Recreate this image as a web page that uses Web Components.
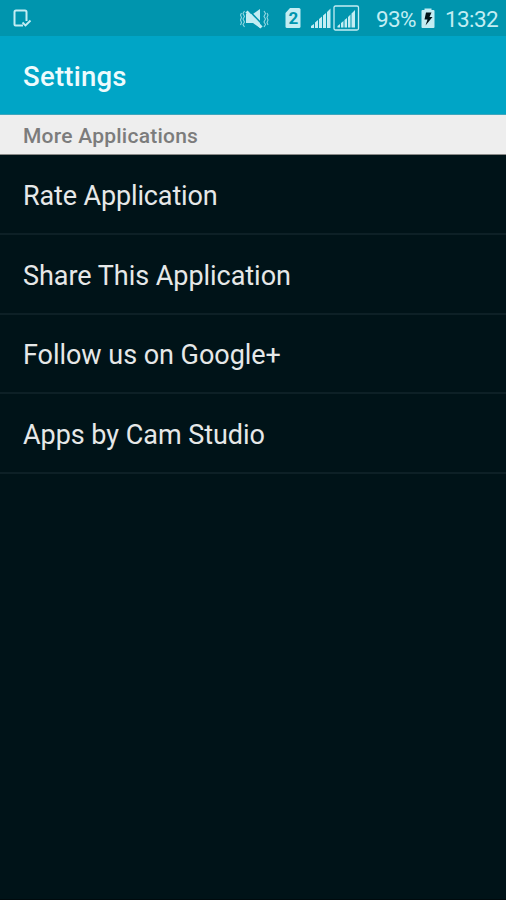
<!DOCTYPE html>
<html lang="en">
<head>
<meta charset="utf-8">
<title>Settings</title>
<style>
html, body {
    margin: 0;
    height: 100%;
}
body {
    font-family: Roboto, "Noto Sans", sans-serif;
    background: #001318;
    overflow: hidden;
}
</style>
</head>
<body>

<settings-screen>
    <status-bar slot="status" time="13:32" battery="93%"></status-bar>
    <action-bar slot="bar">Settings</action-bar>
    <list-header>More Applications</list-header>
    <list-item style="--spacing: -0.14px">Rate Application</list-item>
    <list-item>Share This Application</list-item>
    <list-item>Follow us on Google+</list-item>
    <list-item>Apps by Cam Studio</list-item>
</settings-screen>

<script>

/**
 * base class, fills the shadow root with the static html of the component
 */
class ScreenElement extends HTMLElement {
    constructor() {
        super();
        this.attachShadow({mode: "open"});
        this.shadowRoot.innerHTML = this.constructor.html;
    }
}

// ================================================================

/**
 * slots:
 *  - status
 *  - bar
 *  - default: the rows of the list
 */
class SettingsScreen extends ScreenElement {
    static html = `
        <style>
            :host {
                display: flex;
                flex-direction: column;
                box-sizing: border-box;
                height: 100vh;
                background: #001318;
                border-bottom: 1px solid #000a0d;
            }
            main { flex: 1; }
        </style>
        <slot name="status"></slot>
        <slot name="bar"></slot>
        <main><slot></slot></main>`;
}
customElements.define("settings-screen", SettingsScreen);

// ================================================================

/**
 * attributes:
 *  - time
 *  - battery
 */
class StatusBar extends ScreenElement {
    static html = `
        <style>
            :host {
                display: flex;
                align-items: center;
                box-sizing: border-box;
                height: 36px;
                padding: 0 8px 0 12px;
                background: #0095ae;
                color: #c3edf3;
                font-size: 22.5px;
                line-height: 36px;
            }
            .space { flex: 1; }
            .battery { margin: 2px 5px 0 16px; letter-spacing: -0.6px; }
            .time { margin: 2px 0 0 10px; letter-spacing: -0.6px; }
        </style>
        <status-icon name="saved"></status-icon>
        <span class="space"></span>
        <status-icon name="mute" style="margin-right: 16px"></status-icon>
        <status-icon name="sim" style="margin-right: 10px"></status-icon>
        <status-icon name="signal" style="margin-right: 2px"></status-icon>
        <status-icon name="signal-box"></status-icon>
        <span class="battery"></span>
        <status-icon name="charge"></status-icon>
        <span class="time"></span>`;

    connectedCallback() {
        this.shadowRoot.querySelector(".time").textContent = this.getAttribute("time");
        this.shadowRoot.querySelector(".battery").textContent = this.getAttribute("battery");
    }
}

// width and drawing of each icon, all of them are 36 high
const icons = {
    "saved": [20, `
        <path d="M5 25.500H3.500Q2.500 25.500 2.500 24.500V12Q2.500 10.500 4 10.500H13Q14.500 10.500 14.500 12V21" fill="none" stroke="currentColor" stroke-width="2"/>
        <path d="M5 25.500H11M10.500 22.500L13.500 25.500L18.500 20.500" fill="none" stroke="currentColor" stroke-width="1.900"/>`],
    "mute": [29, `
        <path d="M6 14H13L20 9V28L13 23H6Z" fill="currentColor"/>
        <path d="M8.500 10L22.500 24.500" stroke="#0095ae" stroke-width="1.600"/>
        <path d="M6.500 11.500L21.500 27.500" stroke="currentColor" stroke-width="3"/>
        <path d="M4.500 11L3 13.500L4.500 16.500L3 19L4.500 22L3 24.500L4.500 27M1.500 13L.500 15L1.500 17.500L.500 20L1.500 22.500L.500 25M24 11L25.500 13.500L24 16.500L25.500 19L24 22L25.500 24.500L24 27M27 13L28 15L27 17.500L28 20L27 22.500L28 25" fill="none" stroke="currentColor" stroke-width="1.100" opacity=".75"/>`],
    "sim": [16, `
        <path d="M5 8H14Q15.500 8 15.500 9.500V26.500Q15.500 28 14 28H2Q.500 28 .500 26.500V13Z" fill="currentColor"/>
        <text x="8.500" y="24" text-anchor="middle" font-size="17" font-weight="700" fill="#0095ae">2</text>`],
    "signal": [20, `
        <path d="M0 28V26L3 24V28ZM4 28V22.500L7 20V28ZM8 28V19L11 16.500V28ZM12 28V15.500L15 13V28ZM16 28V12L19.500 8.500V28Z" fill="currentColor"/>`],
    "signal-box": [27, `
        <rect x="1" y="6" width="24.500" height="24" rx="1.500" fill="none" stroke="currentColor" stroke-width="1.300"/>
        <path d="M4.500 27.500V26L7 24V27.500ZM8 27.500V23L10.500 21V27.500ZM11.500 27.500V20L14 18V27.500ZM15 27.500V17L17.500 14.500V27.500ZM18.500 27.500V13.500L22 10V27.500Z" fill="currentColor"/>`],
    "charge": [14, `
        <path d="M3.500 10V8.500H10.500V10H12.500Q13.500 10 13.500 11V27Q13.500 28 12.500 28H1.500Q.500 28 .500 27V11Q.500 10 1.500 10Z" fill="currentColor"/>
        <path d="M5 12.500H10.500L8.500 17H11.500L4.500 25.500L6.500 19.500H3.500Z" fill="#001318"/>`],
};

class StatusIcon extends ScreenElement {
    static html = `
        <style>
            :host { display: block; flex: none; height: 36px; }
            svg { display: block; }
        </style>`;

    connectedCallback() {
        let [width, drawing] = icons[this.getAttribute("name")];
        this.shadowRoot.innerHTML = StatusIcon.html +
            `<svg width="${width}" height="36" viewBox="0 0 ${width} 36">${drawing}</svg>`;
    }
}
customElements.define("status-icon", StatusIcon);
customElements.define("status-bar", StatusBar);

// ================================================================

class ActionBar extends ScreenElement {
    static html = `
        <style>
            :host {
                display: flex;
                align-items: center;
                box-sizing: border-box;
                height: 79px;
                padding: 2px 23px 0;
                background: #00a5c6;
                border-bottom: 1px solid #3fa6bd;
                color: #eefbfd;
                font-size: 27.5px;
                font-weight: 500;
                letter-spacing: 0.25px;
            }
        </style>
        <slot></slot>`;
}
customElements.define("action-bar", ActionBar);

// ================================================================

class ListHeader extends ScreenElement {
    static html = `
        <style>
            :host {
                display: flex;
                align-items: center;
                box-sizing: border-box;
                height: 40px;
                padding: 2px 23px 0;
                background: #eeeeee;
                border-bottom: 1px solid #8a8a88;
                color: #7c7c7c;
                font-size: 21px;
                font-weight: 500;
                letter-spacing: 0.24px;
            }
        </style>
        <slot></slot>`;
}
customElements.define("list-header", ListHeader);

// ================================================================

class ListItem extends ScreenElement {
    static html = `
        <style>
            :host {
                display: flex;
                align-items: center;
                box-sizing: border-box;
                height: 79.75px;
                padding: 4px 23px 0;
                border-bottom: 2px solid #0d2026;
                color: #e6e8e8;
                font-size: 27px;
                letter-spacing: var(--spacing, -0.04px);
            }
        </style>
        <slot></slot>`;
}
customElements.define("list-item", ListItem);

</script>
</body>
</html>
